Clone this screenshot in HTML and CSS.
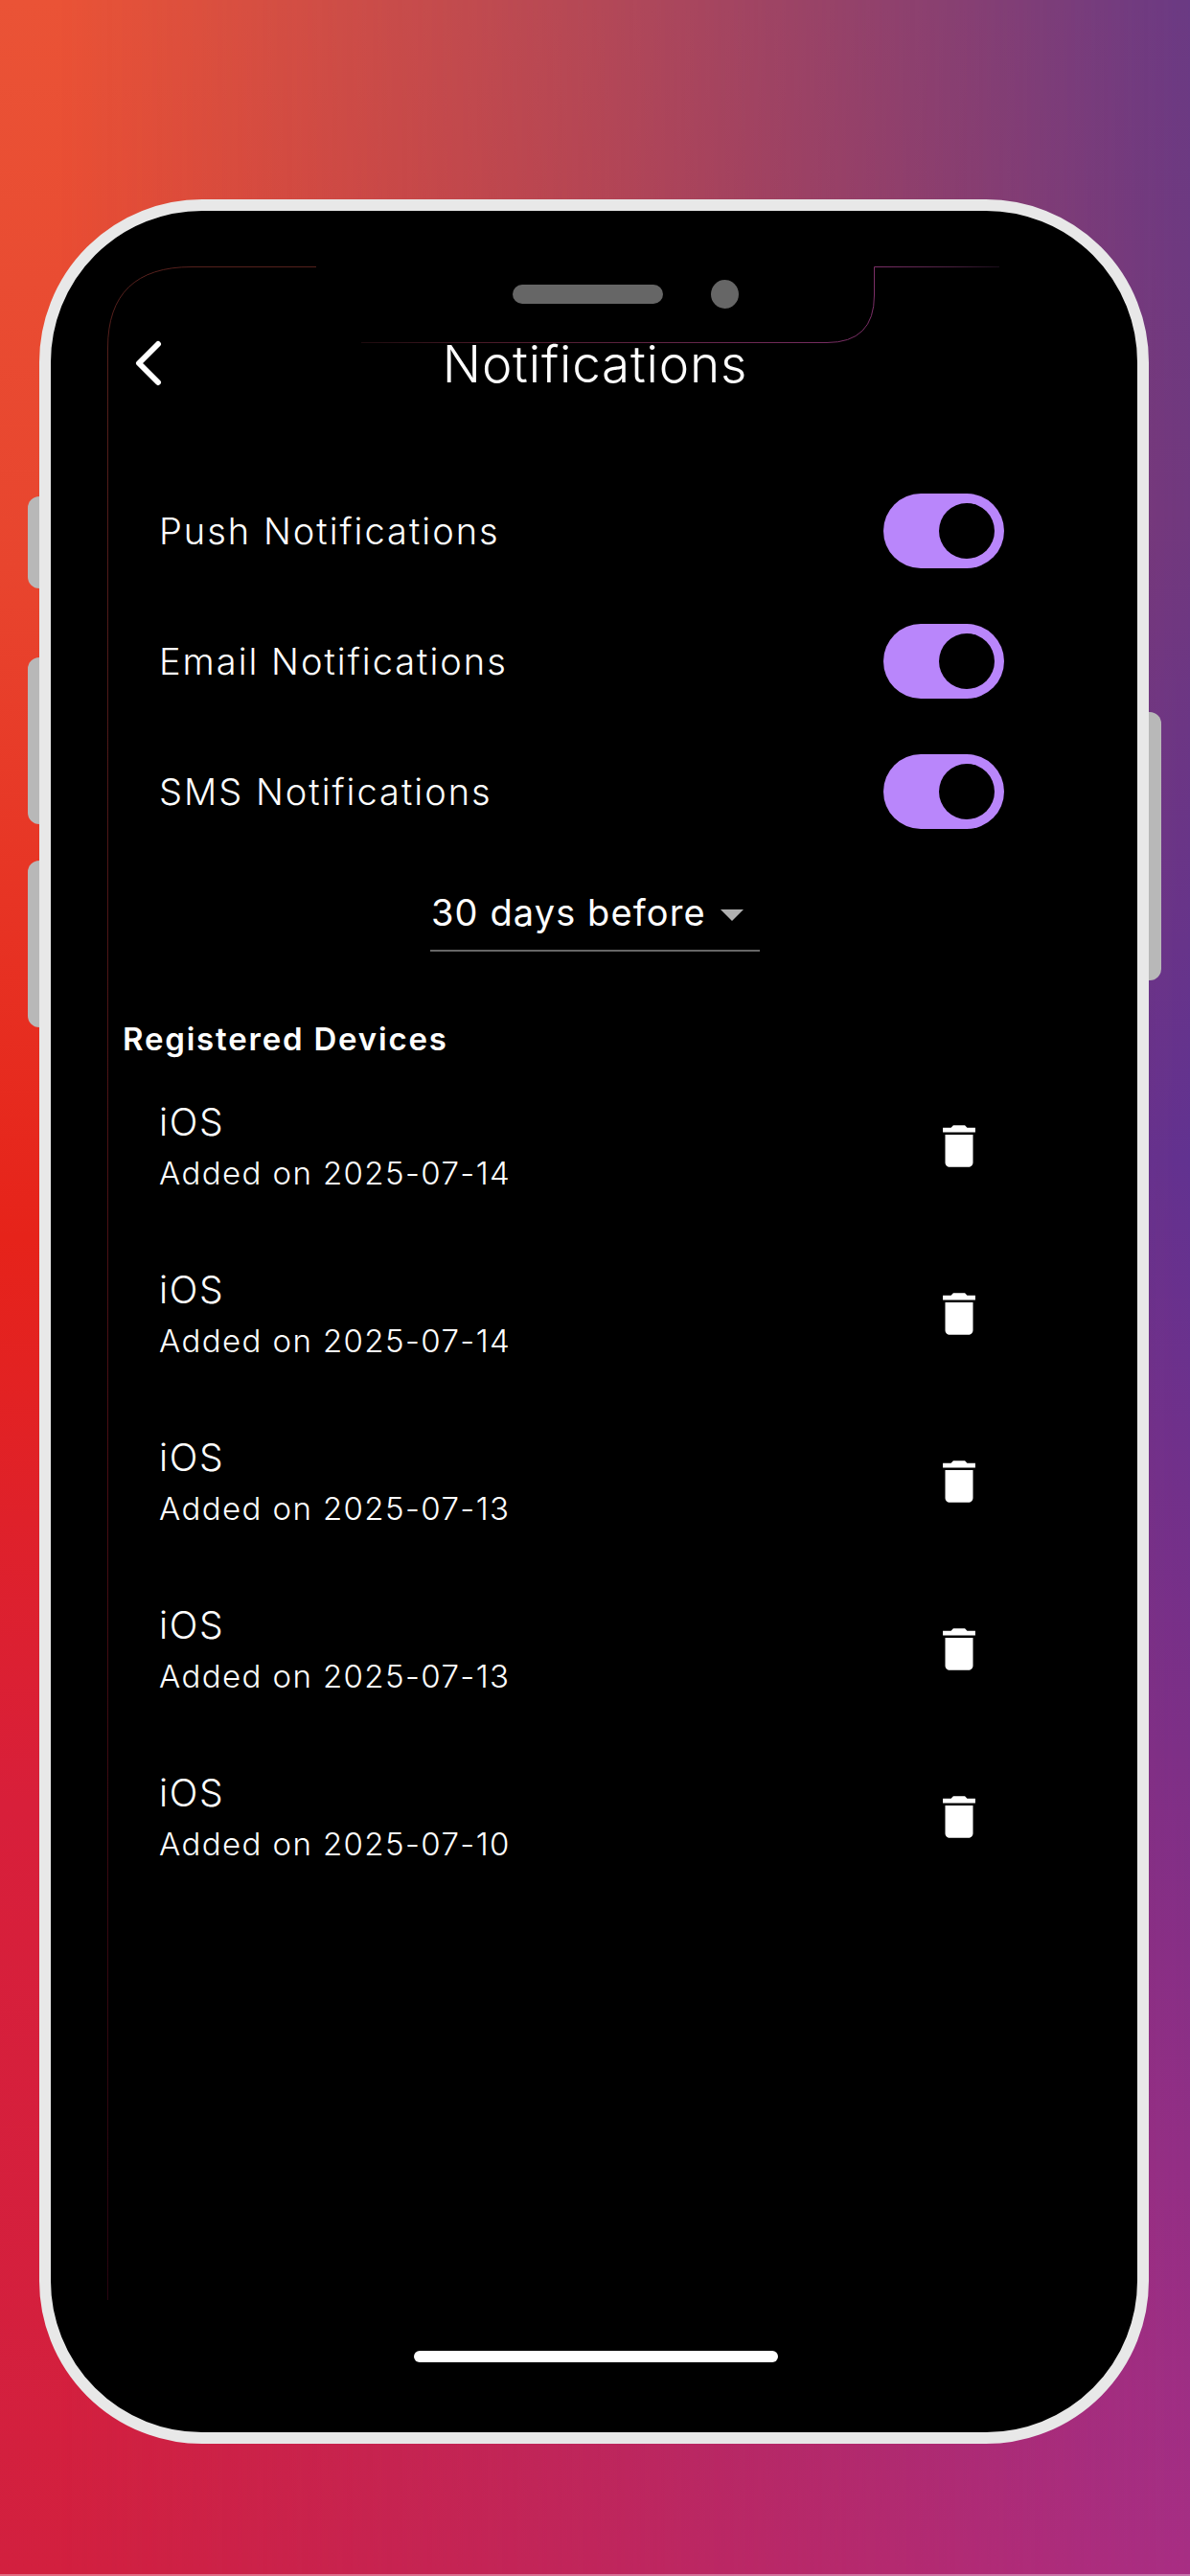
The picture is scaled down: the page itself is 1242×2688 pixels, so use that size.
FILE: index.html
```html
<!DOCTYPE html>
<html lang="en">
<head>
    <meta charset="UTF-8">
    <meta name="viewport" content="width=device-width, initial-scale=1.0">
    <title>Notifications</title>
    <link rel="stylesheet" href="styles.css">
</head>
<body>
    <div class="page">
        <div class="page-tint"></div>

        <!-- Device frame -->
        <div class="phone">
            <span class="side-btn side-btn-mute"></span>
            <span class="side-btn side-btn-up"></span>
            <span class="side-btn side-btn-down"></span>
            <span class="side-btn side-btn-power"></span>

            <div class="screen">
                <header class="app-bar">
                    <button class="back-btn" aria-label="Back">
                        <svg width="28" height="48" viewBox="0 0 28 48">
                            <path d="M24 4 L4 24 L24 44" fill="none" stroke="#fff" stroke-width="6" stroke-linecap="round" stroke-linejoin="round"/>
                        </svg>
                    </button>
                    <h1 class="app-title">Notifications</h1>
                </header>

                <section class="settings">
                    <div class="setting-row">
                        <span class="setting-label">Push Notifications</span>
                        <span class="toggle"><span class="toggle-thumb"></span></span>
                    </div>
                    <div class="setting-row">
                        <span class="setting-label">Email Notifications</span>
                        <span class="toggle"><span class="toggle-thumb"></span></span>
                    </div>
                    <div class="setting-row">
                        <span class="setting-label">SMS Notifications</span>
                        <span class="toggle"><span class="toggle-thumb"></span></span>
                    </div>
                </section>

                <div class="dropdown">
                    <span class="dropdown-value">30 days before</span>
                    <span class="dropdown-caret"></span>
                </div>

                <h2 class="section-title">Registered Devices</h2>

                <ul class="device-list">
                    <li class="device-row">
                        <div class="device-info">
                            <span class="device-name">iOS</span>
                            <span class="device-date">Added on 2025-07-14</span>
                        </div>
                        <svg class="trash-icon" viewBox="0 0 24 24"><path d="M6 19c0 1.1.9 2 2 2h8c1.1 0 2-.9 2-2V7H6v12zM19 4h-3.5l-1-1h-5l-1 1H5v2h14V4z"/></svg>
                    </li>
                    <li class="device-row">
                        <div class="device-info">
                            <span class="device-name">iOS</span>
                            <span class="device-date">Added on 2025-07-14</span>
                        </div>
                        <svg class="trash-icon" viewBox="0 0 24 24"><path d="M6 19c0 1.1.9 2 2 2h8c1.1 0 2-.9 2-2V7H6v12zM19 4h-3.5l-1-1h-5l-1 1H5v2h14V4z"/></svg>
                    </li>
                    <li class="device-row">
                        <div class="device-info">
                            <span class="device-name">iOS</span>
                            <span class="device-date">Added on 2025-07-13</span>
                        </div>
                        <svg class="trash-icon" viewBox="0 0 24 24"><path d="M6 19c0 1.1.9 2 2 2h8c1.1 0 2-.9 2-2V7H6v12zM19 4h-3.5l-1-1h-5l-1 1H5v2h14V4z"/></svg>
                    </li>
                    <li class="device-row">
                        <div class="device-info">
                            <span class="device-name">iOS</span>
                            <span class="device-date">Added on 2025-07-13</span>
                        </div>
                        <svg class="trash-icon" viewBox="0 0 24 24"><path d="M6 19c0 1.1.9 2 2 2h8c1.1 0 2-.9 2-2V7H6v12zM19 4h-3.5l-1-1h-5l-1 1H5v2h14V4z"/></svg>
                    </li>
                    <li class="device-row">
                        <div class="device-info">
                            <span class="device-name">iOS</span>
                            <span class="device-date">Added on 2025-07-10</span>
                        </div>
                        <svg class="trash-icon" viewBox="0 0 24 24"><path d="M6 19c0 1.1.9 2 2 2h8c1.1 0 2-.9 2-2V7H6v12zM19 4h-3.5l-1-1h-5l-1 1H5v2h14V4z"/></svg>
                    </li>
                </ul>

                <div class="home-bar"></div>
            </div>
        </div>

        <!-- Notch and thin screen outline, drawn over the frame -->
        <svg class="notch-layer" width="1242" height="2688" viewBox="0 0 1242 2688">
            <defs>
                <linearGradient id="edgeLeft" gradientUnits="userSpaceOnUse" x1="0" y1="278" x2="0" y2="2410">
                    <stop offset="0" stop-color="#55201c"/>
                    <stop offset="0.6" stop-color="#4a0d14"/>
                    <stop offset="1" stop-color="#2a0410"/>
                </linearGradient>
                <linearGradient id="edgeNotch" gradientUnits="userSpaceOnUse" x1="370" y1="0" x2="1050" y2="0">
                    <stop offset="0" stop-color="#1a0a0c"/>
                    <stop offset="0.2" stop-color="#4a1a28"/>
                    <stop offset="0.8" stop-color="#7c2f68"/>
                    <stop offset="0.92" stop-color="#4a2040"/>
                    <stop offset="1" stop-color="#120a14"/>
                </linearGradient>
            </defs>
            <path d="M112.5 2400 V363 Q112.5 278.5 200 278.5 H330" fill="none" stroke="url(#edgeLeft)" stroke-width="1"/>
            <path d="M377 357.5 H863 Q912.5 357.5 912.5 308 V278.5 H1043" fill="none" stroke="url(#edgeNotch)" stroke-width="1"/>
            <rect x="535" y="297" width="157" height="20" rx="10" fill="#666"/>
            <ellipse cx="756.5" cy="307" rx="14.5" ry="15" fill="#666"/>
        </svg>
    </div>
</body>
</html>
```

FILE: styles.css
```css
* {
    box-sizing: border-box;
}

html, body {
    margin: 0;
    padding: 0;
}

body {
    font-family: Inter, Roboto, "Liberation Sans", sans-serif;
    color: #fff;
}

.page {
    position: relative;
    width: 1242px;
    height: 2688px;
    overflow: hidden;
    padding: 208px 43px 0 41px;
    background: linear-gradient(180deg, #ea5336 0%, #e8452e 22%, #e6231a 48%, #d81f3a 70%, #d2203f 100%);
}

.page::after {
    content: "";
    position: absolute;
    left: 0;
    right: 0;
    bottom: 0;
    height: 2px;
    background-color: rgba(255, 255, 255, 0.35);
}

.page-tint {
    position: absolute;
    inset: 0;
    background: linear-gradient(180deg, #6a3a84 0%, #70387f 20%, #613291 45%, #7c3088 68%, #a82e84 100%);
    -webkit-mask-image: linear-gradient(90deg, transparent 5%, rgba(0, 0, 0, 0.42) 50%, #000 100%);
    mask-image: linear-gradient(90deg, transparent 5%, rgba(0, 0, 0, 0.42) 50%, #000 100%);
}

.phone {
    position: relative;
    width: 1158px;
    height: 2342px;
    border: 12px solid #e8e8e8;
    border-radius: 170px;
    background-color: #000;
}

.side-btn {
    position: absolute;
    width: 12px;
    background-color: #b8b8b8;
    left: -24px;
    border-radius: 12px 0 0 12px;
}

.side-btn-mute {
    top: 298px;
    height: 96px;
}

.side-btn-up {
    top: 466px;
    height: 174px;
}

.side-btn-down {
    top: 678px;
    height: 174px;
}

.side-btn-power {
    left: auto;
    right: -25px;
    width: 13px;
    top: 523px;
    height: 280px;
    border-radius: 0 12px 12px 0;
}

.screen {
    height: 100%;
    padding-top: 130px;
}

.app-bar {
    position: relative;
    height: 58px;
    display: flex;
    align-items: center;
    justify-content: center;
}

.back-btn {
    position: absolute;
    left: 88px;
    top: 5px;
    padding: 0;
    border: none;
    background: none;
    display: flex;
}

.app-title {
    margin: 1px 0 0 2px;
    font-size: 53px;
    font-weight: 350;
    line-height: 58px;
    letter-spacing: 0.8px;
}

.settings {
    margin-top: 78px;
    padding: 0 139px 0 113px;
}

.setting-row {
    height: 136px;
    display: flex;
    align-items: center;
    justify-content: space-between;
}

.setting-label {
    font-size: 38px;
    font-weight: 350;
    line-height: 48px;
    letter-spacing: 2px;
}

.toggle {
    width: 126px;
    height: 78px;
    border-radius: 39px;
    background-color: #b986fb;
    display: flex;
    align-items: center;
    justify-content: flex-end;
    padding-right: 10px;
}

.toggle-thumb {
    width: 58px;
    height: 58px;
    border-radius: 50%;
    background-color: #000;
}

.dropdown {
    width: 344px;
    height: 99px;
    margin-left: 396px;
    padding: 31px 17px 0 1px;
    border-bottom: 2px solid #666;
    display: flex;
    justify-content: space-between;
    align-items: flex-start;
}

.dropdown-value {
    font-size: 38px;
    font-weight: 400;
    line-height: 54px;
    letter-spacing: 1.1px;
}

.dropdown-caret {
    width: 0;
    height: 0;
    margin-top: 24px;
    border-left: 12px solid transparent;
    border-right: 12px solid transparent;
    border-top: 12px solid #b0b0b0;
}

.section-title {
    margin: 69px 0 0 75px;
    font-size: 33px;
    font-weight: 600;
    line-height: 44px;
    letter-spacing: 1.8px;
}

.device-list {
    list-style: none;
    margin: 0;
    padding: 0 0 0 113px;
}

.device-row {
    height: 175px;
    display: flex;
    align-items: flex-start;
    justify-content: space-between;
    padding: 39px 157px 0 0;
}

.device-info {
    display: flex;
    flex-direction: column;
}

.device-name {
    font-size: 39px;
    font-weight: 350;
    line-height: 52px;
    letter-spacing: 1.6px;
}

.device-date {
    margin-top: 1px;
    font-size: 33px;
    font-weight: 350;
    line-height: 52px;
    letter-spacing: 1.4px;
}

.trash-icon {
    width: 58px;
    height: 58px;
    margin-top: 22px;
    fill: #fff;
}

.home-bar {
    position: absolute;
    left: 379px;
    top: 2233px;
    width: 380px;
    height: 12px;
    border-radius: 6px;
    background-color: #fff;
}

.notch-layer {
    position: absolute;
    left: 0;
    top: 0;
    pointer-events: none;
}
```
